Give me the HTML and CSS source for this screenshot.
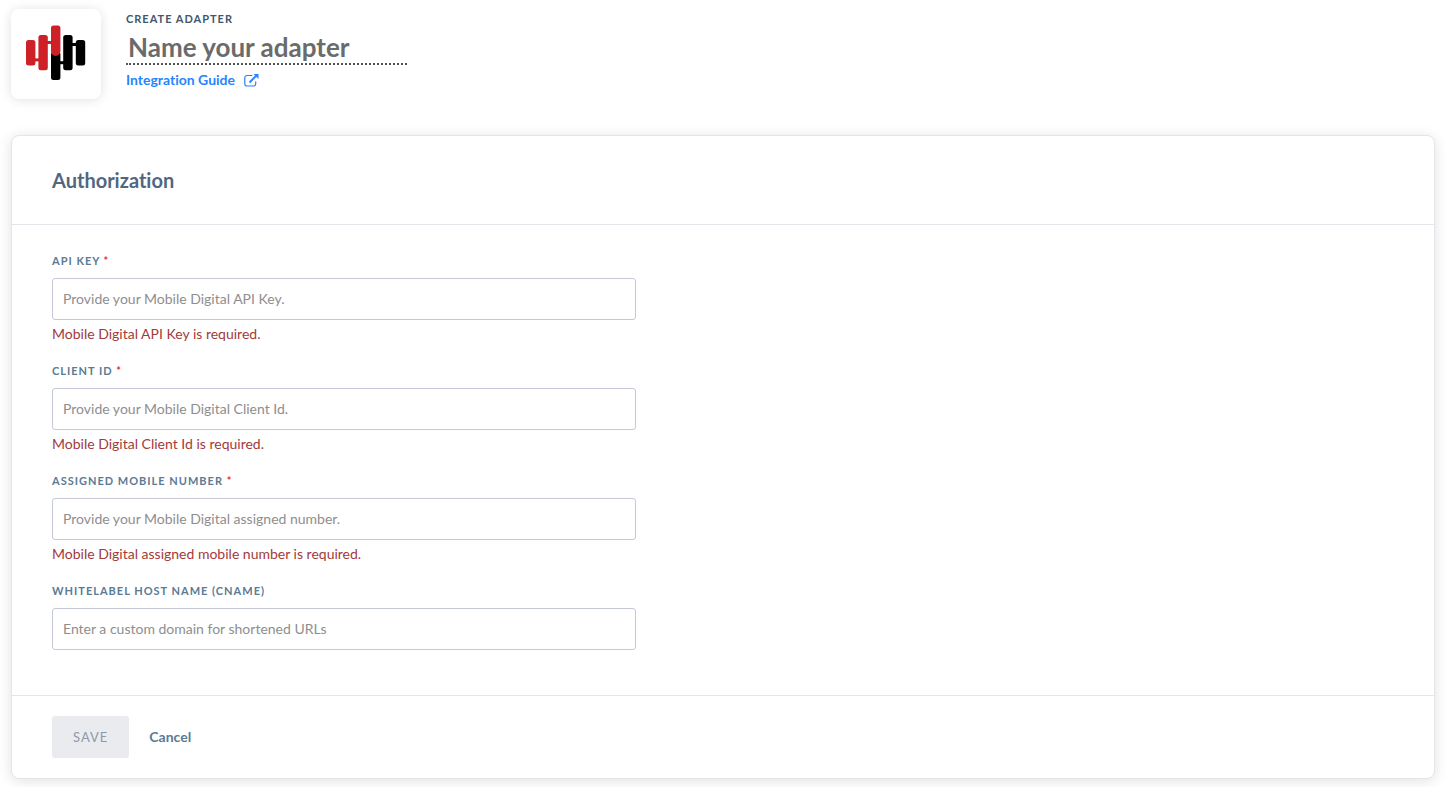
FILE: index.html
```html
<!DOCTYPE html>
<html lang="en">
<head>
    <meta charset="UTF-8">
    <meta name="viewport" content="width=device-width, initial-scale=1.0">
    <title>Create Adapter</title>
    <link rel="stylesheet" href="styles.css">
</head>
<body>

<header class="adapter-header">
    <div class="adapter-logo">
        <svg width="60" height="58" viewBox="0 0 60 58" role="img" aria-label="Mobile Digital">
            <g fill="#000">
                <rect x="25" y="27" width="9.4" height="28" rx="2.5"/>
                <rect x="37.2" y="10" width="9.4" height="35.2" rx="2.5"/>
                <rect x="49.8" y="15" width="9.4" height="25.4" rx="2.5"/>
                <rect x="33" y="36.2" width="6" height="3"/>
                <rect x="45" y="18" width="6" height="3"/>
            </g>
            <g fill="#cd2027">
                <rect x="0" y="15" width="9.4" height="25.4" rx="2.5"/>
                <rect x="12.4" y="10" width="9.4" height="35.2" rx="2.5"/>
                <path d="M27.5 .4h4.4a2.5 2.5 0 0 1 2.5 2.5v23.4a4.7 4.7 0 0 1-9.4 0V2.9a2.5 2.5 0 0 1 2.5-2.5z"/>
                <rect x="8" y="33.4" width="6" height="3"/>
                <rect x="20" y="16" width="6" height="3"/>
            </g>
        </svg>
    </div>
    <div class="adapter-info">
        <div class="adapter-type">Create Adapter</div>
        <input type="text" class="adapter-name" placeholder="Name your adapter" aria-label="Adapter name">
        <a href="#" class="guide-link">Integration Guide
            <svg width="15" height="13" viewBox="0 0 15 13" aria-hidden="true">
                <path d="M8.5 1.5H3A2.2 2.2 0 0 0 .8 3.7v6.1A2.2 2.2 0 0 0 3 12h6.5a2.2 2.2 0 0 0 2.2-2.2V7.5" fill="none" stroke="currentColor" stroke-width="1.2"/>
                <path d="M5.500 8.500l6.500-6.500" fill="none" stroke="currentColor" stroke-width="1.9"/>
                <path d="M9.500 0H14.500V5z" fill="currentColor"/>
            </svg>
        </a>
    </div>
</header>

<form class="card">
    <div class="card-header">
        <h2>Authorization</h2>
    </div>
    <div class="card-body">
        <div class="field">
            <label for="apiKey">API Key <span class="required">*</span></label>
            <input type="text" id="apiKey" placeholder="Provide your Mobile Digital API Key.">
            <div class="error">Mobile Digital API Key is required.</div>
        </div>
        <div class="field">
            <label for="clientId">Client Id <span class="required">*</span></label>
            <input type="text" id="clientId" placeholder="Provide your Mobile Digital Client Id.">
            <div class="error">Mobile Digital Client Id is required.</div>
        </div>
        <div class="field">
            <label for="mobileNumber">Assigned Mobile Number <span class="required">*</span></label>
            <input type="text" id="mobileNumber" placeholder="Provide your Mobile Digital assigned number.">
            <div class="error">Mobile Digital assigned mobile number is required.</div>
        </div>
        <div class="field">
            <label for="hostName">Whitelabel Host Name (CNAME)</label>
            <input type="text" id="hostName" placeholder="Enter a custom domain for shortened URLs">
        </div>
    </div>
    <div class="card-footer">
        <button type="submit" class="save" disabled>Save</button>
        <button type="button" class="cancel">Cancel</button>
    </div>
</form>

</body>
</html>
```

FILE: styles.css
```css
* {
    box-sizing: border-box;
}
body {
    font-family: Lato, sans-serif;
    font-size: 14px;
    line-height: 20px;
    font-variant-ligatures: none;
    color: #506780;
    background-color: #fff;
    margin: 0;
    padding: 9px 12px 8px 11px;
}
input, button {
    font-family: inherit;
}

.adapter-header {
    display: flex;
    gap: 25px;
    margin-bottom: 36px;
}
.adapter-logo {
    display: flex;
    align-items: center;
    justify-content: center;
    width: 90px;
    height: 90px;
    border-radius: 8px;
    background-color: #fff;
    box-shadow: 0 1px 12px rgba(0, 0, 0, 0.12);
}
.adapter-info {
    display: flex;
    flex-direction: column;
    align-items: flex-start;
}
.adapter-type {
    font-size: 11px;
    font-weight: bold;
    letter-spacing: 1px;
    text-transform: uppercase;
    color: #43566b;
}
.adapter-name {
    width: 281px;
    height: 36px;
    padding: 2px 2px 0;
    border: none;
    border-bottom: 2px dotted #555;
    background: none;
    font-size: 26px;
    font-weight: bold;
    color: #666;
    outline: none;
}
.adapter-name::placeholder {
    color: #6b6b6b;
}
.guide-link {
    display: flex;
    align-items: center;
    gap: 9px;
    margin-top: 5px;
    font-weight: bold;
    color: #2684ff;
    text-decoration: none;
}

.card {
    border: 1px solid #e4e5eb;
    border-radius: 8px;
    background-color: #fff;
    box-shadow: 0 2px 14px rgba(0, 0, 0, 0.12);
}
.card-header {
    padding: 32px 40px;
    border-bottom: 1px solid #e4e5eb;
}
.card-header h2 {
    margin: 0;
    font-size: 20px;
    line-height: 24px;
}
.card-body {
    padding: 26px 40px 45px;
}
.field {
    width: 43.5%;
    min-width: 300px;
    margin-bottom: 17px;
}
.field:last-child {
    margin-bottom: 0;
}
.field label {
    display: block;
    margin-bottom: 7px;
    font-size: 11px;
    font-weight: bold;
    letter-spacing: 1px;
    text-transform: uppercase;
    color: #5b7a95;
}
.required {
    color: #f03030;
}
.field input {
    display: block;
    width: 100%;
    height: 42px;
    padding: 0 10px 2px;
    border: 1px solid #c5c8d6;
    border-radius: 3px;
    font-size: 14px;
}
.field input::placeholder {
    color: #8e8e8e;
}
.error {
    margin-top: 4px;
    color: #a33a3a;
}

.card-footer {
    display: flex;
    gap: 20px;
    padding: 20px 40px;
    border-top: 1px solid #e4e5eb;
}
.save {
    height: 42px;
    padding: 0 21px;
    border: none;
    border-radius: 3px;
    background-color: #e9ebef;
    font-size: 13px;
    letter-spacing: 1px;
    text-transform: uppercase;
    color: #8d99a6;
}
.cancel {
    padding: 0 0 2px;
    border: none;
    background: none;
    font-size: 14px;
    font-weight: bold;
    color: #5b7a95;
    cursor: pointer;
}
```
